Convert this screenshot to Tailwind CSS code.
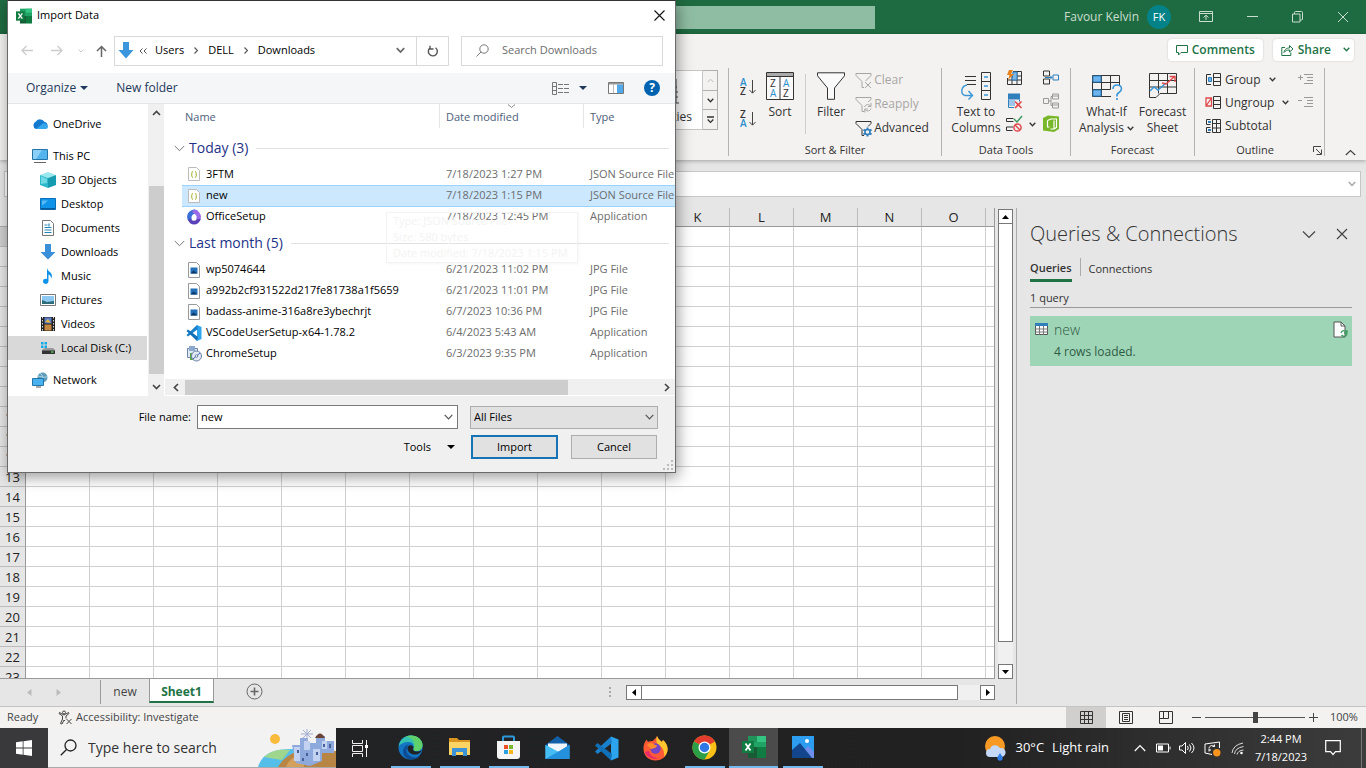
<!DOCTYPE html>
<html lang="en">
<head>
    <meta charset="UTF-8">
    <meta name="viewport" content="width=device-width, initial-scale=1.0">
    <title>Import Data - Excel</title>
    <script src="https://cdn.jsdelivr.net/npm/@tailwindcss/browser@4"></script>
</head>
<body class="relative h-screen overflow-hidden flex flex-col bg-[#e6e6e6] text-[#333] text-xs font-['Open_Sans','Noto_Sans',sans-serif]">

    <!-- Title bar -->
    <header class="h-[34px] shrink-0 bg-[#1f6b41] flex items-center justify-end text-[#c9decf]">
        <input type="text" aria-label="Search" class="w-[274px] h-[23px] bg-[#8fbda3] mr-[189px] outline-none">
        <span class="mr-2">Favour Kelvin</span>
        <button aria-label="Account" class="size-6 rounded-full bg-[#038387] text-white text-[11px] mr-7">FK</button>
        <button aria-label="Ribbon display options" class="mr-[34px]">
            <svg width="14" height="12" viewBox="0 0 14 12" fill="none" stroke="currentColor"><path d="M.5.5h13v10H.5zM.5 2.5h13M7 9V4.500M4.500 6.500 7 4.200l2.500 2.300"/></svg>
        </button>
        <button aria-label="Minimize" class="mr-[34px]">
            <svg width="11" height="12" viewBox="0 0 11 12" stroke="currentColor"><path d="M0 5.500h11"/></svg>
        </button>
        <button aria-label="Restore" class="mr-[34px]">
            <svg width="11" height="12" viewBox="0 0 11 12" fill="none" stroke="currentColor"><path d="M.5 3h7.500v8H.5zM2.500 3V1.500q0-1 1-1h6q1 0 1 1V8q0 1-1 1H8"/></svg>
        </button>
        <button aria-label="Close" class="mr-[17px]">
            <svg width="12" height="12" viewBox="0 0 12 12" stroke="currentColor"><path d="m1 1 10 10M11 1 1 11"/></svg>
        </button>
    </header>

    <!-- Ribbon -->
    <section class="h-[126px] shrink-0 bg-[#f3f2f1] shadow-[0_1px_4px_rgba(0,0,0,.3)] relative">
        <div class="h-[34px] flex items-center justify-end gap-2.5 pr-3 pb-[3px]">
            <button class="h-[22px] px-2 bg-white rounded-sm shadow-[0_0_2px_rgba(0,0,0,.2)] text-[#217346] text-xs font-semibold flex items-center gap-1">
                <svg width="12" height="12" viewBox="0 0 12 12" fill="none" stroke="currentColor"><path d="M.5 1.500h11v7H5L2.500 11V8.500h-2z"/></svg>
                Comments
            </button>
            <button class="h-[22px] px-1 pl-2 bg-white rounded-sm shadow-[0_0_2px_rgba(0,0,0,.2)] text-[#217346] text-xs font-semibold flex items-center gap-1">
                <svg width="13" height="12" viewBox="0 0 13 12" fill="none" stroke="currentColor"><path d="M4 3.500H.8v8h9V8.500M3 8.500C3.500 5 6 4 8.500 4V1.500l3.500 3.500-3.500 3V6C6 6 4.500 6.500 3 8.500z"/></svg>
                Share
                <svg class="ml-2" width="7" height="5" viewBox="0 0 7 5" fill="none" stroke="currentColor" stroke-width="1.300"><path d="m.7.800 2.800 2.900L6.300.800"/></svg>
            </button>
        </div>

        <div class="h-[88px] flex justify-end text-xs">
            <!-- Data types gallery, mostly behind the dialog -->
            <div class="flex items-start pr-2.5 border-r border-[#b5b3b1]">
                <div class="w-28 h-[60px] mt-0.5 border border-[#c6c6c6] bg-white flex flex-col items-end justify-end pr-2.5 pb-1">
                    <svg class="mr-3" width="14" height="30" viewBox="0 0 14 30" fill="none" stroke="#444"><path d="M2 3v20M10 0v24M2 8h9M2 13h10M2 18h10M2 24h11"/></svg>
                    <span>Properties</span>
                </div>
                <div class="mt-0.5 w-[15px] flex flex-col border border-l-0 border-[#b0b0b0] divide-y divide-[#b0b0b0] h-[60px]">
                    <button aria-label="Scroll up" class="flex-1 grid place-items-center text-[#bbb]"><svg width="7" height="5" viewBox="0 0 7 5" fill="none" stroke="currentColor"><path d="M.7 4 3.500 1.200 6.300 4"/></svg></button>
                    <button aria-label="Scroll down" class="flex-1 grid place-items-center"><svg width="7" height="5" viewBox="0 0 7 5" fill="none" stroke="currentColor" stroke-width="1.300"><path d="m.7.800 2.800 2.900L6.300.800"/></svg></button>
                    <button aria-label="More" class="flex-1 grid place-items-center"><svg width="7" height="8" viewBox="0 0 7 8" fill="none" stroke="currentColor" stroke-width="1.300"><path d="M0 1h7M.7 3.500l2.800 2.900 2.800-2.900"/></svg></button>
                </div>
            </div>

            <!-- Sort & Filter -->
            <div class="w-[213px] flex flex-col border-r border-[#b5b3b1]">
                <div class="flex-1 flex items-start pl-2.5">
                    <div class="flex flex-col gap-2.5 pt-2">
                        <button aria-label="Sort A to Z">
                            <svg width="17" height="22" viewBox="0 0 17 22" class="text-[10px] font-semibold"><text x="1" y="10" fill="#2f8fcb">A</text><text x="1" y="19" fill="#333">Z</text><path d="M13.500 4v13M10.500 14l3 3.200 3-3.200" fill="none" stroke="#444"/></svg>
                        </button>
                        <button aria-label="Sort Z to A">
                            <svg width="17" height="22" viewBox="0 0 17 22" class="text-[10px] font-semibold"><text x="1" y="10" fill="#333">Z</text><text x="1" y="19" fill="#2f8fcb">A</text><path d="M13.500 4v13M10.500 14l3 3.200 3-3.200" fill="none" stroke="#444"/></svg>
                        </button>
                    </div>
                    <button class="ml-2.5 pt-1 flex flex-col items-center gap-1">
                        <svg width="28" height="28" viewBox="0 0 28 28" class="text-[10px]"><path d="M.5.500h27v27H.5z" fill="#fafafa" stroke="#333"/><path d="M1 1h26v3.500H1z" fill="#aaa"/><path d="M.5 4.500h27M14 4.500v23" stroke="#333"/><text x="4" y="15" fill="#333">Z</text><text x="17" y="15" fill="#2f8fcb">A</text><text x="4" y="25" fill="#2f8fcb">A</text><text x="17" y="25" fill="#333">Z</text></svg>
                        Sort
                    </button>
                    <div class="w-px h-[60px] bg-[#d0cecc] mt-1.5 ml-[11px]"></div>
                    <button class="ml-[11px] pt-1 flex flex-col items-center gap-1">
                        <svg width="28" height="28" viewBox="0 0 28 28" fill="#fafafa" stroke="#333"><path d="M.5.800h27v3L17.500 16v11.300h-7V16L.5 3.800z"/></svg>
                        Filter
                    </button>
                    <div class="ml-2.5 flex flex-col">
                        <button class="h-6 flex items-center gap-px text-[#a8a6a4]">
                            <svg width="18" height="17" viewBox="0 0 18 17" fill="none" stroke="currentColor"><path d="M1 1.500h15v2L10.500 9M1 3.500 7 9.500v6h2M1 1.500v2M10 10l6 6M16 10l-6 6"/></svg>
                            Clear
                        </button>
                        <button class="h-6 flex items-center gap-px text-[#a8a6a4]">
                            <svg width="18" height="17" viewBox="0 0 18 17" fill="none" stroke="currentColor"><path d="M1 1.500h15v2L13 6M1 3.500 7 9.500v6h2M1 1.500v2M9.500 11c1-3 4.500-3 6-1M16 7v3.500h-3M16 12.500c-1 3-4.500 3-6 1M9.800 16.500v-3.500h3"/></svg>
                            Reapply
                        </button>
                        <button class="h-6 flex items-center gap-px">
                            <svg width="18" height="17" viewBox="0 0 18 17" fill="none" stroke="#333"><path d="M1 1.500h15v2L13 6.500M1 3.500 7 9.500v6h2M1 1.500v2"/><path d="M12.500 7.500v9M8.500 9.700l8 4.600M16.500 9.700l-8 4.600" stroke="#2f7fbd" stroke-width="2"/><circle cx="12.500" cy="12" r="2.500" fill="#f3f2f1" stroke="#2f7fbd" stroke-width="1.500"/></svg>
                            Advanced
                        </button>
                    </div>
                </div>
                <p class="text-center text-[11px] leading-3">Sort &amp; Filter</p>
            </div>

            <!-- Data Tools -->
            <div class="w-[129px] flex flex-col border-r border-[#b5b3b1]">
                <div class="flex-1 flex items-start pl-2.5">
                    <button class="w-12 pt-1 flex flex-col items-center gap-1 leading-4">
                        <svg width="32" height="28" viewBox="0 0 32 28" fill="none" stroke="#333"><path d="M5 4.500h11M5 8.500h11M7 12.500h9"/><path d="M21.500.500h9v27h-9zM21.500 9.500h9M21.500 18.500h9"/><path d="M24 5h4M24 14h4M24 23h4M7 13C1 14 0 22 5 23.500h7M8.500 19l4 4.500-4 4" stroke="#3a96d6" stroke-width="1.400"/></svg>
                        Text to Columns
                    </button>
                    <div class="ml-[5px] grid grid-cols-[37px_18px] gap-y-[3px]">
                        <button aria-label="Flash Fill"><svg width="18" height="20" viewBox="0 0 18 20" fill="none" stroke="#333"><path d="M8 3.500h8.500v13h-14V10M2.500 12h14M8.500 8h8M7 8v8.500M12 3.500v13"/><path d="M8 4h4v8H7z" fill="#7db8e8" stroke="#2f7fbd"/><path d="M4 2h4L6 6h3l-6 6 1.500-5H2z" fill="#e8811c" stroke="none"/></svg></button>
                        <button aria-label="Consolidate"><svg width="18" height="20" viewBox="0 0 18 20" fill="none" stroke="#333"><path d="M1.500 3h6v5h-6zM1.500 11h6v5h-6z"/><path d="M11 7h5.500v5H11zM3 9.500h7M8 7.500l2 2-2 2" stroke="#2f7fbd"/></svg></button>
                        <button aria-label="Remove Duplicates"><svg width="18" height="20" viewBox="0 0 18 20" fill="none"><path d="M3 2.500h12v6H3z" fill="#2f7fbd"/><path d="M3.500 8.500v8H9M14.500 8.500v2" stroke="#2f7fbd"/><path d="M4 9h6v6H4z" fill="#9cc7ea"/><path d="m10 10.500 6.500 6.500M16.500 10.500 10 17" stroke="#e0484c" stroke-width="1.600"/></svg></button>
                        <button aria-label="Relationships"><svg width="18" height="20" viewBox="0 0 18 20" fill="none" stroke="#9b9997"><path d="M1.500 7.500h5v5h-5zM10.500 3h6v5h-6zM10.500 12h6v5h-6zM6.500 10H9V5.500h1.500M9 10v4.500h1.500M10.500 5h6M10.500 14h6"/></svg></button>
                        <button aria-label="Data Validation" class="flex items-center gap-1.5"><svg width="18" height="20" viewBox="0 0 18 20" fill="none" stroke="#333"><path d="M8.500 4.500h-7v3h7M8 13h-6.500v3.500h6"/><path d="m9 5 3 3 5-6" stroke="#3c9a5f" stroke-width="1.500"/><circle cx="12.500" cy="13.500" r="3.600" stroke="#e0484c" stroke-width="1.500"/><path d="m10 11 5 5" stroke="#e0484c" stroke-width="1.500"/></svg><svg width="7" height="5" viewBox="0 0 7 5" fill="none" stroke="currentColor" stroke-width="1.300"><path d="m.7.800 2.800 2.900L6.300.800"/></svg></button>
                        <button aria-label="Data Model"><svg width="18" height="20" viewBox="0 0 18 20"><path d="m1 4 5-2.500 11 1V15l-5 3-11-1.500z" fill="#78b72a"/><path d="M5.500 6.500 9 5h5.500v8.500L12 15M5.500 6.500V13h2M12 6.500V15H8.500" fill="none" stroke="#fff" stroke-width="1.200"/></svg></button>
                    </div>
                </div>
                <p class="text-center text-[11px] leading-3">Data Tools</p>
            </div>

            <!-- Forecast -->
            <div class="w-[124px] flex flex-col border-r border-[#b5b3b1]">
                <div class="flex-1 flex items-start justify-center gap-1 leading-4">
                    <button class="w-14 pt-1 flex flex-col items-center gap-1">
                        <svg width="32" height="28" viewBox="0 0 32 28" fill="none" stroke="#333"><path d="M1.500 3.500h27V14M20 24.500H1.500v-21M1.500 10.500h27M1.500 17.500h18M10.500 3.500v21M19.500 3.500v14"/><path d="M2 4h8v6H2zM2 18h8v6H2z" fill="#6eb4ee" stroke="#2f7fbd"/><path d="M22 17q0-4 4-4t4.500 3.500q0 2.500-2.500 4t-2 4M26 26v2" stroke="#3a96d6" stroke-width="1.600"/></svg>
                        <span class="whitespace-nowrap">What-If<br>Analysis <svg class="inline" width="7" height="5" viewBox="0 0 7 5" fill="none" stroke="currentColor" stroke-width="1.300"><path d="m.7.800 2.800 2.900L6.300.800"/></svg></span>
                    </button>
                    <button class="w-12 pt-1 flex flex-col items-center gap-1">
                        <svg width="30" height="28" viewBox="0 0 30 28" fill="none" stroke="#333"><path d="M1.500 1.500h27v20H12l-4 4H1.500zM1.500 8.500h27M1.500 15h27M10.500 1.500v20M19.500 1.500v20"/><path d="m2 19 4-4 4 3 8-7" stroke="#3a96d6" stroke-width="1.500"/><path d="m14 11 4 1 8-7M21.500 4.500H27V10" stroke="#e0484c" stroke-width="1.400"/></svg>
                        Forecast Sheet
                    </button>
                </div>
                <p class="text-center text-[11px] leading-3">Forecast</p>
            </div>

            <!-- Outline -->
            <div class="w-[130px] flex flex-col border-r border-[#b5b3b1]">
                <div class="flex-1 grid grid-cols-[1fr_26px] auto-rows-[23px] items-center pl-2.5">
                    <button class="flex items-center gap-[3px]"><svg width="17" height="15" viewBox="0 0 17 15" fill="none" stroke="#333"><path d="M8.500 1.500h7v12h-7zM8.500 5.500h7M8.500 9.500h7M6 2.500H1.500v10H6"/><path d="M3.500 5.500h3v4h-3z" fill="#6eb4ee" stroke="#2f7fbd"/></svg>Group<svg class="ml-[5px]" width="7" height="5" viewBox="0 0 7 5" fill="none" stroke="currentColor" stroke-width="1.300"><path d="m.7.800 2.800 2.900L6.300.800"/></svg></button>
                    <button aria-label="Show Detail"><svg width="16" height="13" viewBox="0 0 16 13" fill="none" stroke="#9b9997"><path d="M0 4.500h5M2.500 2v5M6 1.500h9M9 4.500h6M9 7.500h6M6 10.500h9"/></svg></button>
                    <button class="flex items-center gap-[3px]"><svg width="17" height="15" viewBox="0 0 17 15" fill="none" stroke="#333"><path d="M8.500 1.500h7v12h-7zM8.500 5.500h7M8.500 9.500h7"/><path d="M1 3h5.500v8H1zM1 11l5.500-8" stroke="#e0484c" stroke-width="1.300"/></svg>Ungroup<svg class="ml-[5px]" width="7" height="5" viewBox="0 0 7 5" fill="none" stroke="currentColor" stroke-width="1.300"><path d="m.7.800 2.800 2.900L6.300.800"/></svg></button>
                    <button aria-label="Hide Detail"><svg width="16" height="13" viewBox="0 0 16 13" fill="none" stroke="#9b9997"><path d="M0 4.500h4M6 1.500h9M9 4.500h6M9 7.500h6M6 10.500h9"/></svg></button>
                    <button class="flex items-center gap-[3px]"><svg width="17" height="16" viewBox="0 0 17 16" fill="none" stroke="#333"><path d="M7.500 1.500h8v13h-8zM7.500 5.500h8M7.500 10h8M11.500 1.500v13M5.500 1.500h-4v5h4M5.500 9.500h-4v5h4"/><path d="M3 4h3M3 12h3" stroke="#2f7fbd" stroke-width="2"/></svg>Subtotal</button>
                </div>
                <div class="flex items-center">
                    <p class="flex-1 text-center text-[11px] leading-3 pl-0.5">Outline</p>
                    <button aria-label="Outline settings" class="mr-0.5"><svg width="9" height="9" viewBox="0 0 9 9" fill="none" stroke="#444"><path d="M.5 6V.5H8M3 3l5 5M8.500 3.500v5h-5"/></svg></button>
                </div>
            </div>
            <button aria-label="Collapse ribbon" class="w-[41px] pl-5 self-end"><svg width="11" height="7" viewBox="0 0 11 7" fill="none" stroke="#444" stroke-width="1.200"><path d="m.8 6 4.700-4.500L10.200 6"/></svg></button>
        </div>
    </section>

    <!-- Formula bar -->
    <div class="h-12 shrink-0 flex items-start gap-2 pl-1 pr-[5px] pt-[11px]">
        <input type="text" aria-label="Name box" class="w-36 h-[26px] bg-white border border-[#c6c6c6]">
        <div class="flex-1 h-[26px] bg-white border border-[#c6c6c6] flex items-center pr-1">
            <input type="text" aria-label="Formula" class="flex-1 min-w-0 outline-none">
            <svg width="8" height="6" viewBox="0 0 8 6" fill="none" stroke="#a5a5a5" stroke-width="1.400"><path d="m.8 1 3.200 3.500L7.200 1"/></svg>
        </div>
    </div>

    <main class="flex-1 min-h-0 flex">
        <div class="flex-1 min-w-0 flex flex-col">
            <div class="flex-1 min-h-0 flex">
                <div class="flex-1 min-w-0 overflow-hidden bg-white border-r border-b border-[#9a9a9a]">
                    <table class="table-fixed w-max border-separate border-spacing-0 text-[13px] text-[#222]">
                        <thead><tr id="columns" class="h-[19px]"></tr></thead>
                        <tbody id="rows"></tbody>
                    </table>
                </div>
                <div class="w-[15px] ml-[3px] mr-[3px] mt-px flex flex-col">
                    <button aria-label="Scroll up" class="h-[15px] bg-white border border-[#777] grid place-items-center"><svg width="7" height="4" viewBox="0 0 7 4"><path d="M0 4 3.500 0 7 4z"/></svg></button>
                    <div class="flex-1 bg-[#f0f0f0]"><div class="h-[95%] bg-white border border-t-0 border-[#777]"></div></div>
                    <button aria-label="Scroll down" class="h-[15px] bg-white border border-[#777] grid place-items-center"><svg width="7" height="4" viewBox="0 0 7 4"><path d="m0 0 3.500 4L7 0z"/></svg></button>
                </div>
            </div>

            <!-- Sheet tabs -->
            <div class="h-[27px] flex items-start text-[#444]">
                <div class="w-[101px] h-6 mt-px flex items-center gap-6 pl-[27px] border-r border-[#9a9a9a]">
                    <button aria-label="Previous sheet"><svg width="5" height="7" viewBox="0 0 5 7" fill="#bbb"><path d="M4.500 0v7L0 3.500z"/></svg></button>
                    <button aria-label="Next sheet"><svg width="5" height="7" viewBox="0 0 5 7" fill="#bbb"><path d="M.5 0v7L5 3.500z"/></svg></button>
                </div>
                <button class="w-12 h-6 pt-0.5 text-xs">new</button>
                <button class="w-[65px] h-6 pt-[3px] bg-white border-x border-[#9a9a9a] border-b-2 border-b-[#217346] text-[#217346] text-xs font-bold">Sheet1</button>
                <button aria-label="New sheet" class="ml-8 mt-1"><svg width="17" height="17" viewBox="0 0 17 17" fill="none" stroke="#666"><circle cx="8.500" cy="8.500" r="7.500"/><path d="M8.500 4.500v8M4.500 8.500h8" stroke-width="1.600"/></svg></button>
                <div class="flex-1"></div>
                <svg class="mt-2 mr-3.5" width="3" height="11" viewBox="0 0 3 11" fill="#aaa"><path d="M0 0h2v2H0zM0 4h2v2H0zM0 8h2v2H0z"/></svg>
                <div class="w-[369px] h-[15px] mt-1.5 mr-[21px] flex bg-[#f0f0f0]">
                    <button aria-label="Scroll left" class="w-4 bg-white border border-[#777] grid place-items-center"><svg width="4" height="7" viewBox="0 0 4 7"><path d="M4 0v7L0 3.500z"/></svg></button>
                    <div class="w-[316px] bg-white border border-[#777] border-l-0"></div>
                    <button aria-label="Scroll right" class="w-[15px] ml-auto bg-white border border-[#777] grid place-items-center"><svg width="4" height="7" viewBox="0 0 4 7"><path d="M0 0v7l4-3.500z"/></svg></button>
                </div>
            </div>
        </div>

        <!-- Queries pane -->
        <aside class="w-[350px] mb-0.5 pl-[13px] pr-3.5 pt-2.5 border-l border-[#ababab]">
            <div class="h-8 flex items-center">
                <h2 class="flex-1 text-xl font-light">Queries &amp; Connections</h2>
                <button aria-label="Pane options" class="mr-5"><svg width="14" height="9" viewBox="0 0 14 9" fill="none" stroke="#444" stroke-width="1.200"><path d="m1 1.500 6 6 6-6"/></svg></button>
                <button aria-label="Close pane" class="mr-1"><svg width="12" height="12" viewBox="0 0 12 12" stroke="#444" stroke-width="1.200"><path d="m1 1 10 10M11 1 1 11"/></svg></button>
            </div>
            <div class="flex mt-2 h-6 text-[11px]">
                <button class="font-semibold border-b-3 border-[#217346] pt-0.5 pb-[3px] leading-4">Queries</button>
                <span class="w-px h-[18px] bg-[#ababab] mx-2"></span>
                <button class="h-5 pt-0.5 leading-4">Connections</button>
            </div>
            <p class="mt-2 h-[18px] text-[11px] leading-4 border-b border-[#999]">1 query</p>
            <div class="mt-2 h-[50px] bg-[#9fd5b7] px-1 flex items-start">
                <svg class="mt-[7px] ml-px" width="13" height="12" viewBox="0 0 13 12"><path d="M.5.500h12v11H.5z" fill="#fff" stroke="#555"/><path d="M0 0h13v3H0z" fill="#2f7fbd"/><path d="M4.500 3v9M8.500 3v9M0 6h13M0 9h13" stroke="#777"/></svg>
                <div class="flex-1 pl-1.5 pt-1 text-[#2f5b45]">
                    <h3 class="text-sm font-light leading-5">new</h3>
                    <p class="leading-6">4 rows loaded.</p>
                </div>
                <svg class="mt-[5px]" width="15" height="17" viewBox="0 0 15 17" fill="none"><path d="M1 1h7l4 4v11H1z" fill="#fff" stroke="#555"/><path d="M8 1v4h4" stroke="#555"/><path d="M8 12c1-3 4-3 5.500-1M14 9v3h-3M14 13c-1 3-4 3-5.500 1" stroke="#3c9a5f" stroke-width="1.300"/></svg>
            </div>
        </aside>
    </main>

    <!-- Status bar -->
    <footer class="h-[22px] shrink-0 bg-[#f3f2f1] border-t border-[#c4c4c4] flex items-center pl-[7px] pr-2 text-[11px] text-[#444]">
        <span class="w-[51px]">Ready</span>
        <button class="flex items-center gap-[3px]">
            <svg width="15" height="15" viewBox="0 0 15 15" fill="none" stroke="#444"><circle cx="6" cy="2.500" r="1.500"/><path d="M1 3.500 4.500 6v3L2.500 13.500l1.500.500 2-4 1 1M1 3.500l.500-1L6 5l4.500-2.500.5 1L8 6v2.500M8.500 9l5 5M13.500 9l-5 5"/></svg>
            Accessibility: Investigate
        </button>
        <div class="flex-1"></div>
        <button aria-label="Normal view" class="w-10 h-[21px] bg-[#d0cfce] grid place-items-center"><svg width="13" height="13" viewBox="0 0 13 13" fill="none" stroke="#333"><path d="M.5.500h12v12H.5zM4.500 0v13M8.500 0v13M0 4.500h13M0 8.500h13"/></svg></button>
        <button aria-label="Page layout" class="w-10 grid place-items-center"><svg width="14" height="13" viewBox="0 0 14 13" fill="none" stroke="#333"><path d="M.5.500h13v12H.5zM3.500 2.500h7v8h-7zM5 4.500h4M5 6.500h4M5 8.500h4"/></svg></button>
        <button aria-label="Page break preview" class="w-10 grid place-items-center"><svg width="14" height="13" viewBox="0 0 14 13" fill="none" stroke="#333"><path d="M.5.500h13v12H.5zM4.500.500v7M9.500.500v7M.5 7.500h9"/></svg></button>
        <button aria-label="Zoom out" class="ml-1.5"><svg width="9" height="9" viewBox="0 0 9 9" stroke="#444"><path d="M0 4.500h9"/></svg></button>
        <input type="range" aria-label="Zoom" value="51" class="w-[100px] h-3 mx-1 appearance-none bg-transparent [&::-webkit-slider-runnable-track]:h-px [&::-webkit-slider-runnable-track]:bg-[#555] [&::-webkit-slider-thumb]:appearance-none [&::-webkit-slider-thumb]:w-[5px] [&::-webkit-slider-thumb]:h-[11px] [&::-webkit-slider-thumb]:-mt-[5px] [&::-webkit-slider-thumb]:bg-[#444]">
        <button aria-label="Zoom in"><svg width="9" height="9" viewBox="0 0 9 9" stroke="#444"><path d="M0 4.500h9M4.500 0v9"/></svg></button>
        <span class="ml-3 w-7">100%</span>
    </footer>

    <!-- Taskbar -->
    <nav class="h-10 shrink-0 bg-linear-to-r from-[#232428] via-[#212121] to-[#3c3c3c] via-70% flex items-stretch text-white">
        <button aria-label="Start" class="w-12 bg-[#39393b] grid place-items-center"><svg width="16" height="16" viewBox="0 0 16 16" fill="#fff"><path d="M0 2.300 6.700 1.300v6.300H0zM7.500 1.200 16 0v7.600H7.500zM0 8.400h6.700v6.300L0 13.700zM7.500 8.400H16V16l-8.500-1.200z"/></svg></button>
        <label class="w-72 bg-[#f2f2f2] border-b border-[#aaa] flex items-center pl-3 overflow-hidden">
            <svg class="shrink-0" width="17" height="17" viewBox="0 0 17 17" fill="none" stroke="#222" stroke-width="1.300"><circle cx="10.500" cy="6.500" r="5.500"/><path d="M6.500 10.500.800 16.200"/></svg>
            <input type="text" aria-label="Search Windows" placeholder="Type here to search" class="flex-1 min-w-0 pl-[11px] text-sm outline-none placeholder:text-[#333]">
            <svg class="shrink-0 self-end" width="80" height="38" viewBox="0 0 80 38">
                <circle cx="19" cy="10" r="5" fill="#f9bb3c"/>
                <path d="M2 38C6 24 18 19 42 20v18z" fill="#55bfea"/><path d="M8 28c8-7 16-8 26-7l-8 10z" fill="#9fd68e"/>
                <path d="M22 38c6-11 18-16 28-18l30 2v16z" fill="#b98545"/><path d="M30 38c3-8 10-12 18-14v14z" fill="#d3a05e"/>
                <path d="M36 16h8V9h8v5h8V7h9v5h9v12H66v8l-12 5-14-3z" fill="#8ea9dc"/>
                <path d="M38 18h6v14h-6zM48 12h6v9h-6zM57 20h7v12h-7zM66 12h5v8h-5z" fill="#c3d2f0"/>
                <path d="M59 9q5-9 10 0z" fill="#6b4237"/><path d="M51 0v12M45 5h12M47 1l8 8M55 1l-8 8" stroke="#a3afd0"/>
                <path d="M41 21h2v3h-2zM50 24h2v3h-2zM60 23h2v3h-2zM67 15h2v3h-2zM46 29h2v3h-2zM73 15h2v4h-2z" fill="#47609c"/>
            </svg>
        </label>
        <button aria-label="Task View" class="w-12 mr-0.5 grid place-items-center"><svg width="17" height="17" viewBox="0 0 17 17" fill="none" stroke="#eee"><path d="M.5 0v3.500h10V0M.5 5.500h10v6H.5zM.5 17v-3.500h10V17M14.500 0v17"/><path d="M13 5h3v3h-3z" fill="#fff" stroke="none"/></svg></button>
        <button aria-label="Edge" class="w-[49px] px-1 flex flex-col items-center justify-between"><span></span>
            <svg width="25" height="25" viewBox="0 0 25 25"><circle cx="12.500" cy="12.500" r="12" fill="#1474c4"/><path d="M.8 11C2 4 7 .5 13 .5c7 0 11.500 5 11.500 9.500 0 4-3 6-6 6-2.500 0-4-1-3-3 1-3-1-6-5-6-4.500 0-8 2-9.700 4z" fill="#35c1b0"/><path d="M13 .5c7 0 11.500 5 11.500 9.500 0 4-3 6-6 6-2 0-3.500-.800-3-2.500C18 9 16 3 8 1.600 9.500.800 11 .5 13 .5z" fill="#5fd06a"/><path d="M9 12c-2 5 2 10.500 8 10.500 3 0 5-1 6-2.500C21 23 17 24.800 13 24.500 6 24 4 18 5.500 14 6.500 11 9 9.500 11 9.500 10 10 9.500 11 9 12z" fill="#0c4d96"/><path d="M9.500 12.500c1-2.500 4.500-3 6-.500-1 3 0 4.500 3 4.500 2 0 4-.500 5-1.500-.500 3-4 5-7.500 4.500-4-.500-7-3.500-6.500-7z" fill="#202226"/></svg>
            <span class="w-10 h-0.5 bg-[#76b9ed]"></span></button>
        <button aria-label="File Explorer" class="w-[49px] px-1 flex flex-col items-center justify-between"><span></span>
            <svg width="23" height="20" viewBox="0 0 23 20"><path d="M1 1h8l2 2h11v4H1z" fill="#d9951f"/><path d="M1 5h21v13H1z" fill="#fbd464"/><path d="M4 19v-8h15v8h-4v-4H8v4z" fill="#3d93d6"/></svg>
            <span class="w-10 h-0.5 bg-[#76b9ed]"></span></button>
        <button aria-label="Microsoft Store" class="w-[49px] px-1 flex flex-col items-center justify-between"><span></span>
            <svg width="25" height="25" viewBox="0 0 25 25"><path d="M1 6h23v15q0 3-3 3H4q-3 0-3-3z" fill="#f5f5f5"/><path d="M7 6V2.500q0-1 1-1h9q1 0 1 1V6" fill="none" stroke="#2c9ad8" stroke-width="2"/><path d="M8 10h4v4H8z" fill="#f04e23"/><path d="M13 10h4v4h-4z" fill="#7cb82f"/><path d="M8 15h4v4H8z" fill="#2c9fe0"/><path d="M13 15h4v4h-4z" fill="#f8b71c"/></svg>
            <span class="w-10 h-0.5 bg-[#76b9ed]"></span></button>
        <button aria-label="Mail" class="w-[49px] grid place-items-center"><svg width="25" height="24" viewBox="0 0 25 24"><path d="M.5 9 12.500 0l12 9v3H.5z" fill="#1360a8"/><path d="M.5 9v14h24V9l-12 8z" fill="#38b0ee"/><path d="M3 7.500h19v3L12.500 17 3 10.500z" fill="#f2f6fa"/><path d="M.5 9v14L14 16z" fill="#45bdf3"/><path d="M.5 23 24.500 9v14z" fill="#2391dc"/></svg></button>
        <button aria-label="Visual Studio Code" class="w-[49px] grid place-items-center"><svg width="25" height="25" viewBox="0 0 25 25"><path d="m17 .5 7.500 3v18l-7.500 3z" fill="#2da5ee"/><path d="M17 .5 1 15.500l2.500 2.500L18 7z" fill="#1a80cb"/><path d="M17 24.500 1 9.500 3.500 7 18 18z" fill="#1171b8"/></svg></button>
        <button aria-label="Firefox" class="w-[49px] grid place-items-center"><svg width="25" height="25" viewBox="0 0 25 25"><path d="M12.500 24.500C5 24.500.5 19 .5 13 .5 8 2 6 3.500 3.500L5 6c1-1 3-1 5-1 1-2 3-2 4-5 1 3 3 4 5 6l1-2c3 3 4.500 6 4.500 9 0 7-5.500 11.500-12 11.500z" fill="#ff5a36"/><path d="M14 0c1 3 3 4 5 6l1-2c6 5 6 12 1 17 1-6-2-11-6-12-2-3-2-6-1-9z" fill="#ffc52f"/><path d="M2 16c2 6 9 8 14 6-5 0-9-2-10-7z" fill="#e5286f"/><circle cx="12.500" cy="12.500" r="5.200" fill="#7446c6"/><path d="M4 9c3-3 6-2 8 0 3 0 2 2 0 3-2 0-2 1-4 1z" fill="#ff8b2b"/></svg></button>
        <button aria-label="Chrome" class="w-[49px] px-1 flex flex-col items-center justify-between"><span></span>
            <svg width="25" height="25" viewBox="0 0 25 25"><circle cx="12.500" cy="12.500" r="12" fill="#fbc116"/><path d="M12.500 12.500 2.100 6.500a12 12 0 0 1 20.800 0z" fill="#e33b2e"/><path d="M2.100 6.500a12 12 0 0 0 10.400 18l5.200-9-5.200-3z" fill="#2b9f48"/><circle cx="12.500" cy="12.500" r="6" fill="#fff"/><circle cx="12.500" cy="12.500" r="4.700" fill="#2f77e5"/></svg>
            <span class="w-10 h-0.5 bg-[#76b9ed]"></span></button>
        <button aria-label="Excel" class="w-[49px] bg-[#4b4b4b] flex flex-col items-center justify-between"><span></span>
            <svg width="24" height="22" viewBox="0 0 24 22"><path d="M6 0h18v22H6z" fill="#21a366"/><path d="M6 0h9v6H6z" fill="#20935a"/><path d="M15 0h9v6h-9z" fill="#33c481"/><path d="M6 11h9v11H6z" fill="#185c37"/><path d="M15 11h9v5h-9zM15 16h9v6h-9z" fill="#107c41"/><path d="M0 5h12v12H0z" fill="#107c41"/><path d="m3.500 7.500 5 7M8.500 7.500l-5 7" stroke="#fff" stroke-width="1.800"/></svg>
            <span class="w-full h-0.5 bg-[#76b9ed]"></span></button>
        <button aria-label="Photos" class="w-[49px] px-1 flex flex-col items-center justify-between"><span></span>
            <svg width="22" height="22" viewBox="0 0 22 22"><path d="M0 0h22v22H0z" fill="#2c9df0"/><path d="m11 14 5-4 6 6v6H11z" fill="#6d8eea"/><path d="M0 14 8 7l12 15H0z" fill="#12458c"/><circle cx="15" cy="5" r="2" fill="#fff"/></svg>
            <span class="w-10 h-0.5 bg-[#76b9ed]"></span></button>
        <div class="flex-1"></div>
        <button class="flex items-center gap-2 text-[13px] mr-[25px]">
            <svg width="23" height="25" viewBox="0 0 23 25"><circle cx="11" cy="10" r="10" fill="#f79a24"/><path d="M6 21a4 4 0 0 1 0-8 5.500 5.500 0 0 1 10-1 4.500 4.500 0 0 1 2 9z" fill="#c5d8f8"/><path d="m16 17 2.500 4a2.700 2.700 0 1 1-5 0z" fill="#2c7be5"/></svg>
            30°C <span>Light rain</span>
        </button>
        <button aria-label="Show hidden icons" class="mr-2.5"><svg width="12" height="8" viewBox="0 0 12 8" fill="none" stroke="#fff" stroke-width="1.200"><path d="m.8 7 5.200-5.500L11.200 7"/></svg></button>
        <button aria-label="Battery" class="mr-2"><svg width="15" height="10" viewBox="0 0 15 10" fill="none" stroke="#fff"><path d="M.5 1h12v8H.5zM14 3.500v3"/><path d="M2 2.500h5v5H2z" fill="#fff" stroke="none"/></svg></button>
        <button aria-label="Volume" class="mr-2"><svg width="17" height="14" viewBox="0 0 17 14" fill="none" stroke="#fff"><path d="M.5 5h2.500L6.500 1.500v11L3 9H.5zM8.500 5q1.500 2 0 4M10.500 3.500q3 3.500 0 7M12.500 2q5 5 0 10"/></svg></button>
        <button aria-label="Update" class="mr-2.5"><svg width="17" height="17" viewBox="0 0 17 17" fill="none" stroke="#fff"><path d="M8 14.500 1 13V4l14.500-2v6"/><path d="M5 8c1-3 4-3 5.500-1.500V4.500M10.500 6.500h-2M5 8.500v3M5 10h2"/><circle cx="12.800" cy="12.800" r="3.700" fill="#f7941d" stroke="none"/></svg></button>
        <button aria-label="Network" class="mr-2"><svg width="13" height="13" viewBox="0 0 13 13" fill="none" stroke="#ddd"><path d="M1 11Q2 3 12 1M3.500 12Q4 6 12.500 4.500M6 12.500Q7 8.500 12.500 8"/><circle cx="10.500" cy="11" r="1.300" fill="#fff" stroke="none"/></svg></button>
        <button class="w-[58px] text-center text-[11px] leading-[18px]">2:44 PM<br>7/18/2023</button>
        <button aria-label="Notifications" class="ml-[15px] mr-5"><svg width="16" height="16" viewBox="0 0 16 16" fill="none" stroke="#fff" stroke-width="1.200"><path d="M.7.700h14.600v11h-4.800L8 14.500l-2.500-2.800H.7z"/></svg></button>
        <button aria-label="Show desktop" class="w-[5px] border-l border-[#777]"></button>
    </nav>

    <!-- Import Data dialog -->
    <div role="dialog" aria-label="Import Data" class="absolute left-[7px] top-0 w-[669px] h-[473px] flex flex-col bg-white text-black text-[11px] border border-[#6a6a6a] border-t-[#333] shadow-[2px_4px_14px_rgba(0,0,0,.4)]">
        <div class="h-8 shrink-0 flex items-center pl-2 pr-2.5 pb-[3px]">
            <svg width="16" height="16" viewBox="0 0 24 22"><path d="M6 0h18v22H6z" fill="#21a366"/><path d="M15 0h9v6h-9z" fill="#33c481"/><path d="M6 11h9v11H6z" fill="#185c37"/><path d="M15 11h9v11h-9z" fill="#107c41"/><path d="M0 4h13v14H0z" fill="#107c41"/><path d="m3.500 7 6 8M9.500 7l-6 8" stroke="#fff" stroke-width="2"/></svg>
            <h1 class="flex-1 pl-[5px]">Import Data</h1>
            <button aria-label="Close"><svg width="11" height="11" viewBox="0 0 11 11" stroke="#111" stroke-width="1.100"><path d="m.5.500 10 10M10.500.500l-10 10"/></svg></button>
        </div>

        <div class="h-10 shrink-0 flex items-center pl-[13px] pr-3 pb-[5px]">
            <button aria-label="Back"><svg width="12" height="11" viewBox="0 0 12 11" fill="none" stroke="#ccc" stroke-width="1.300"><path d="M12 5.500H1M5.500 1 1 5.500 5.500 10"/></svg></button>
            <button aria-label="Forward" class="ml-[18px]"><svg width="12" height="11" viewBox="0 0 12 11" fill="none" stroke="#ccc" stroke-width="1.300"><path d="M0 5.500h11M6.500 1 11 5.500 6.500 10"/></svg></button>
            <button aria-label="Recent locations" class="ml-[15px]"><svg width="6" height="4" viewBox="0 0 6 4" fill="none" stroke="#ccc"><path d="m.5.500 2.500 2.500L5.500.5"/></svg></button>
            <button aria-label="Up" class="ml-3"><svg width="11" height="12" viewBox="0 0 11 12" fill="none" stroke="#666" stroke-width="1.500"><path d="M5.500 12V1.500M1 6l4.500-4.500L10 6"/></svg></button>
            <div class="ml-[7px] w-[335px] h-[30px] border border-[#d9d9d9] flex items-center pl-[3px]">
                <svg width="16" height="17" viewBox="0 0 16 17"><path d="M5 0h6v8h4.500L8 16.500.5 8H5z" fill="#3a96dd"/></svg>
                <svg class="ml-[5px] mr-2" width="8" height="6" viewBox="0 0 8 6" fill="none" stroke="#555"><path d="M3.500.500 1 3l2.500 2.500M7.500.500 5 3l2.500 2.500"/></svg>
                <a href="#" class="text-black">Users</a>
                <svg class="mx-2.5" width="4" height="7" viewBox="0 0 4 7" fill="none" stroke="#555" stroke-width="1.200"><path d="m.5.500 3 3-3 3"/></svg>
                <a href="#" class="text-black">DELL</a>
                <svg class="mx-2.5" width="4" height="7" viewBox="0 0 4 7" fill="none" stroke="#555" stroke-width="1.200"><path d="m.5.500 3 3-3 3"/></svg>
                <a href="#" class="text-black">Downloads</a>
                <button aria-label="Previous locations" class="ml-auto mr-[11px]"><svg width="9" height="7" viewBox="0 0 9 7" fill="none" stroke="#666" stroke-width="1.700"><path d="m.8 1.200 3.700 3.900 3.700-3.900"/></svg></button>
                <button aria-label="Refresh" class="w-8 h-full border-l border-[#d9d9d9] grid place-items-center"><svg width="12" height="12" viewBox="0 0 12 12" fill="none" stroke="#555" stroke-width="1.400"><path d="M3.500 2.500a4.500 4.500 0 1 0 5 .200M3 .8v3.200h3.500"/></svg></button>
            </div>
            <label class="ml-3 flex-1 h-[30px] border border-[#d9d9d9] flex items-center pl-3.5">
                <svg width="13" height="13" viewBox="0 0 13 13" fill="none" stroke="#777"><circle cx="8" cy="5" r="4.200"/><path d="M5 8 .5 12.500"/></svg>
                <input type="text" aria-label="Search Downloads" placeholder="Search Downloads" class="flex-1 min-w-0 pl-[13px] outline-none placeholder:text-[#6d6d6d]">
            </label>
        </div>

        <div class="h-[31px] shrink-0 bg-[#f5f6f7] border-b border-[#e5e6e7] flex items-center pl-[18px] pr-[15px] text-[#1e395b] text-xs">
            <button class="flex items-center gap-1">Organize <svg width="8" height="4" viewBox="0 0 8 4" fill="currentColor"><path d="M0 0h8L4 4z"/></svg></button>
            <button class="ml-7">New folder</button>
            <button aria-label="Change view" class="ml-auto flex items-center gap-2.5"><svg width="17" height="13" viewBox="0 0 17 13" fill="none" stroke="#777"><path d="M.5.500h4v12h-4zM.5 4.500h4M.5 8.500h4"/><path d="M6 2.500h11M6 6.500h11M6 10.500h11" stroke-dasharray="5 1"/></svg><svg width="8" height="4" viewBox="0 0 8 4" fill="currentColor"><path d="M0 0h8L4 4z"/></svg></button>
            <button aria-label="Preview pane" class="ml-[21px]"><svg width="16" height="12" viewBox="0 0 16 12"><path d="M.5.500h15v11H.5z" fill="#fff" stroke="#777"/><path d="M1 1h14v1.500H1z" fill="#999"/><path d="M9 2.500h6V11H9z" fill="#4fa9ea"/><path d="M5.500 2v9" stroke="#bbb"/></svg></button>
            <button aria-label="Help" class="ml-5 size-4 rounded-full bg-[#0063b1] text-white font-bold leading-4">?</button>
        </div>

        <div class="h-[292px] shrink-0 flex">
            <ul class="w-[139px] pt-2 *:h-6 *:flex *:items-center *:gap-[5px]">
                <li class="pl-6"><svg width="16" height="16" viewBox="0 0 16 16"><path d="M4 13a4 4 0 0 1 0-7.500A5 5 0 0 1 12.500 6 3.600 3.600 0 0 1 13 13z" fill="#1479cf"/><path d="M4 13l7-5.500a4 4 0 0 1 5 3q0 2.500-3 2.500z" fill="#37a7ed"/></svg>OneDrive</li>
                <li class="pl-6 mt-2"><svg width="16" height="16" viewBox="0 0 16 16"><path d="M.5 1.500h15v10H.5z" fill="#54b5ee" stroke="#2474a8"/><path d="M1 2h9L4 11H1z" fill="#8cd0f7"/><path d="M2 14.500h12" stroke="#666"/></svg>This PC</li>
                <li class="pl-8"><svg width="16" height="16" viewBox="0 0 16 16"><path d="m0 3 8-3 8 3-8 3z" fill="#9be7ef"/><path d="M0 3l8 3v10l-8-3z" fill="#2cb9cb"/><path d="m16 3-8 3v10l8-3z" fill="#149bb0"/><path d="m1 4 6 3v4L1 12z" fill="#70d8e3"/></svg>3D Objects</li>
                <li class="pl-8"><svg width="16" height="16" viewBox="0 0 16 16"><path d="M.5 2.500h15v11H.5z" fill="#0f93e8" stroke="#0a6fb4"/><path d="M2 4.500h6L3 9H2z" fill="#58b9f4"/><path d="M1 12h14v1.500H1z" fill="#0a5d9a"/></svg>Desktop</li>
                <li class="pl-8"><svg width="16" height="16" viewBox="0 0 16 16" fill="none"><path d="M2.500.500h8l3 3v12h-11z" fill="#fff" stroke="#777"/><path d="M4.500 5h3M9 3.500v3M4.500 7.500h7M4.500 10h7M4.500 12.500h7" stroke="#2687b5" stroke-width="1.200"/></svg>Documents</li>
                <li class="pl-8"><svg width="16" height="16" viewBox="0 0 16 16"><path d="M5 0h6v8h4.500L8 15.500.5 8H5z" fill="#3a8fd9"/></svg>Downloads</li>
                <li class="pl-8"><svg width="16" height="16" viewBox="0 0 16 16"><path d="M7 0c1 4 5 4 5 8l-1 3c0-3-1-4-2.500-4.500V13c0 4-5.500 3.500-5.500.5C3 11 5 10.500 7 11z" fill="#0f93e8"/></svg>Music</li>
                <li class="pl-8"><svg width="16" height="16" viewBox="0 0 16 16"><path d="M.5 2.500h15v11H.5z" fill="#fff" stroke="#777"/><path d="M2 4h12v8H2z" fill="#8cc8f2"/><path d="m2 8 5 2 7-1v3H2z" fill="#2c6c78"/></svg>Pictures</li>
                <li class="pl-8"><svg width="16" height="16" viewBox="0 0 16 16"><path d="M1 1h14v14H1z" fill="#222"/><path d="M4.500 1.500h7v6h-7z" fill="#5b7dc9"/><path d="M4.500 8.500h7v6h-7z" fill="#c48840"/><path d="m5 6 3-3 3 4z" fill="#e2b846"/><path d="M2.500 1v14M13.500 1v14" stroke="#ddd" stroke-dasharray="1.500 1.500"/></svg>Videos</li>
                <li class="pl-8 bg-[#d9d9d9]"><svg width="16" height="16" viewBox="0 0 16 16"><path d="M1 2h2.500v2.500H1zM4.500 2H7v2.500H4.500zM1 5.500h2.500V8H1zM4.500 5.500H7V8H4.500z" fill="#10a9e8"/><path d="m3 9 2-1h8l2 2v4H2v-4z" fill="#999"/><path d="M2 10.500h13V14H2z" fill="#333"/><path d="M11 12h2.500" stroke="#6f6"/></svg><a href="#" class="text-black">Local Disk (C:)</a></li>
                <li class="pl-6 mt-2"><svg width="16" height="16" viewBox="0 0 16 16"><circle cx="10.500" cy="5.500" r="5" fill="#5d9bb8"/><path d="M8 1q5 4 1 9M6 4q6 2 9 1" fill="none" stroke="#a9d3e5"/><path d="M.5 6.500h11v7H.5z" fill="#48b1f0" stroke="#2474a8"/><path d="M4 15h5" stroke="#555"/></svg>Network</li>
            </ul>
            <div class="w-4 mx-px bg-[#f0f0f0] flex flex-col items-center">
                <button aria-label="Scroll up" class="h-[82px] pb-16"><svg width="9" height="6" viewBox="0 0 9 6" fill="none" stroke="#444" stroke-width="1.600"><path d="M1 5l3.500-3.600L8 5"/></svg></button>
                <div class="flex-1 w-[15px] bg-[#cdcdcd]"></div>
                <button aria-label="Scroll down" class="h-[22px] pt-1"><svg width="9" height="6" viewBox="0 0 9 6" fill="none" stroke="#444" stroke-width="1.600"><path d="m1 1 3.500 3.600L8 1"/></svg></button>
            </div>

            <div class="flex-1 min-w-0 flex flex-col">
                <div class="relative flex-1 min-h-0 overflow-hidden">
                    <table class="table-fixed w-[521px] text-left">
                        <colgroup><col class="w-[17px]"><col class="w-[257px]"><col class="w-36"><col></colgroup>
                        <thead>
                            <tr class="h-7 text-[#4c607a] text-[11px] align-top *:font-normal">
                                <td></td>
                                <th scope="col" class="pl-[3px] pt-1.5">Name</th>
                                <th scope="col" class="pl-[7px] pt-1.5 bg-[linear-gradient(#e5e5e5,#e5e5e5)] bg-[length:1px_24px] bg-no-repeat">Date modified</th>
                                <th scope="col" class="pl-[7px] pt-1.5 bg-[linear-gradient(#e5e5e5,#e5e5e5)] bg-[length:1px_24px] bg-no-repeat">Type</th>
                            </tr>
                        </thead>
                        <tbody id="files"></tbody>
                    </table>
                    <svg class="absolute left-[342px] top-0" width="9" height="5" viewBox="0 0 9 5" fill="none" stroke="#888"><path d="m1 .5 3.500 3L8 .5"/></svg>
                    <!-- Tooltip on its way out -->
                    <div role="tooltip" class="absolute left-[221px] top-[108px] w-48 h-[51px] px-1.5 border border-[#f3f3f3] shadow-[1px_1px_3px_rgba(0,0,0,.04)] text-[#f3f3f3] leading-4 whitespace-nowrap">Type: JSON Source File<br>Size: 580 bytes<br>Date modified: 7/18/2023 1:15 PM</div>
                </div>
                <div class="h-4 mb-px bg-[#f0f0f0] flex items-center pl-2 pr-[5px]">
                    <button aria-label="Scroll left"><svg width="6" height="9" viewBox="0 0 6 9" fill="none" stroke="#444" stroke-width="1.600"><path d="M5 1 1.400 4.500 5 8"/></svg></button>
                    <div class="ml-1.5 w-[383px] h-[15px] bg-[#cdcdcd]"></div>
                    <button aria-label="Scroll right" class="ml-auto"><svg width="6" height="9" viewBox="0 0 6 9" fill="none" stroke="#444" stroke-width="1.600"><path d="m1 1 3.600 3.500L1 8"/></svg></button>
                </div>
            </div>
        </div>

        <form class="relative flex-1 bg-[#f0f0f0] pt-[9px] pr-[17px] flex flex-col gap-1.5">
            <div class="flex items-center justify-end">
                <label for="filename" class="mr-1.5">File name:</label>
                <div class="w-[261px] h-6 bg-white border border-[#7a7a7a] flex items-center pr-1">
                    <input id="filename" type="text" value="new" class="flex-1 min-w-0 pl-[3px] outline-none">
                    <svg width="9" height="6" viewBox="0 0 9 6" fill="none" stroke="#555" stroke-width="1.200"><path d="m.7.800 3.800 4 3.800-4"/></svg>
                </div>
                <div class="relative ml-3 w-[188px]">
                    <select aria-label="File type" class="block w-full h-[23px] pl-[3px] appearance-none bg-[#e1e1e1] border border-[#adadad]"><option>All Files</option></select>
                    <svg class="absolute right-1 top-2 pointer-events-none" width="9" height="6" viewBox="0 0 9 6" fill="none" stroke="#555" stroke-width="1.200"><path d="m.7.800 3.800 4 3.800-4"/></svg>
                </div>
            </div>
            <div class="flex items-center justify-end">
                <button type="button" class="flex items-center gap-4">Tools <svg width="8" height="4" viewBox="0 0 8 4"><path d="M0 0h8L4 4z"/></svg></button>
                <button type="button" class="ml-4 w-[87px] h-6 bg-[#e1e1e1] border-2 border-[#1673b5]">Import</button>
                <button type="button" class="ml-[13px] mr-px w-[86px] h-6 bg-[#e1e1e1] border border-[#adadad]">Cancel</button>
            </div>
            <svg class="absolute right-0.5 bottom-0.5" width="10" height="10" viewBox="0 0 10 10" fill="#bbb"><path d="M8 0h2v2H8zM4 4h2v2H4zM8 4h2v2H8zM0 8h2v2H0zM4 8h2v2H4zM8 8h2v2H8z"/></svg>
        </form>
    </div>

    <script>
        // Worksheet grid
        document.getElementById("columns").innerHTML =
            '<th class="w-[26px] bg-[#e6e6e6] border-r border-b border-[#ababab]"></th>' +
            "ABCDEFGHIJKLMNOP".split("").map(c =>
                `<th scope="col" class="w-16 h-[19px] p-0 leading-4 font-normal bg-[#e6e6e6] border-r border-b border-r-[#bbb] border-b-[#999]">${c}</th>`
            ).join("");

        let html = "";
        for (let r = 1; r <= 23; r++) {
            html += `<tr class="h-5"><th scope="row" class="h-5 p-0 leading-[18px] font-normal border-r border-b border-r-[#999] border-b-[#bbb] ${r === 1 ? "bg-[#cfcfcf]" : "bg-[#e6e6e6]"}">${r}</th>`;
            html += '<td class="h-5 p-0 border-r border-b border-[#d0d0d0]"></td>'.repeat(16) + "</tr>";
        }
        document.getElementById("rows").innerHTML = html;

        // File list
        const icons = {
            json: '<path d="M2.500 1.500h8l3 3v10h-11z" fill="#fff" stroke="#bbb"/><path d="M7 5.500q-1.500 0-1.200 2T5 8.500q1 0 .8 1.300T7 11.500M9 5.500q1.500 0 1.200 2t.8 1q-1 0-.8 1.300T9 11.500" fill="none" stroke="#a9b43a"/>',
            jpg: '<path d="M2.500.500h8l3 3v12h-11z" fill="#fff" stroke="#999"/><path d="M4.500 5.500h7v6h-7z" fill="#2270b8"/><path d="m4.500 11.500 3-3 4 3z" fill="#0b3766"/>',
            office: '<path d="M8 .5Q1 2 1 8q0 3 2.500 4.500L6 11Q4 6 9 4.500L12 2Q10 .3 8 .5z" fill="#3b6fd8"/><path d="M8 .5q6 1 7 7 0 3-2 5l-3-2q2-4-2-6L6 3z" fill="#9a6be8"/><path d="M2 11q2 4.500 6 4.500 5 0 7-6l-4 1q-4 3-7-1z" fill="#5a41b8"/>',
            code: '<path d="M11 0l4.500 2v12L11 16z" fill="#2da5ee"/><path d="M11 0 .5 10 2 11.500 12 4z" fill="#1a80cb"/><path d="M11 16 .5 6 2 4.500 12 12z" fill="#1171b8"/>',
            setup: '<path d="M1.500 2.500h10v9h-10z" fill="#dfe9f4" stroke="#6d86a8"/><path d="M3 0h6v5H3z" fill="#8aa9cc"/><path d="M4 7h4v7H4z" fill="#5da548"/><circle cx="10.500" cy="10" r="5" fill="#e4e9f2" stroke="#667ea6"/><path d="m7 13 7-6" stroke="#3468b8"/><circle cx="10.500" cy="10" r="1.300" fill="#fff" stroke="#667ea6"/>'
        };
        const groups = [
            ["Today (3)", [
                ["json", "3FTM", "7/18/2023 1:27 PM", "JSON Source File"],
                ["json", "new", "7/18/2023 1:15 PM", "JSON Source File"],
                ["office", "OfficeSetup", "7/18/2023 12:45 PM", "Application"]
            ]],
            ["Last month (5)", [
                ["jpg", "wp5074644", "6/21/2023 11:02 PM", "JPG File"],
                ["jpg", "a992b2cf931522d217fe81738a1f5659", "6/21/2023 11:01 PM", "JPG File"],
                ["jpg", "badass-anime-316a8re3ybechrjt", "6/7/2023 10:36 PM", "JPG File"],
                ["code", "VSCodeUserSetup-x64-1.78.2", "6/4/2023 5:43 AM", "Application"],
                ["setup", "ChromeSetup", "6/3/2023 9:35 PM", "Application"]
            ]]
        ];
        document.getElementById("files").innerHTML = groups.map(([title, files]) => `
            <tr class="h-8"><th colspan="4" class="p-0 font-normal text-sm text-[#1e3287]">
                <div class="flex items-center pl-[9px] w-[504px]">
                    <svg width="11" height="7" viewBox="0 0 11 7" fill="none" stroke="#777"><path d="m.8 1 4.700 4.700L10.200 1"/></svg>
                    <span class="pl-1 pr-2">${title}</span><span class="flex-1 h-px bg-[#e2e2e2]"></span>
                </div>
            </th></tr>` + files.map(([icon, name, date, type]) => {
                const bg = name === "new" ? "bg-[#cce8ff] border-y border-[#99d1ff]" : "";
                return `<tr class="h-[21px] whitespace-nowrap text-[#6d6d6d]">
                    <td></td>
                    <td class="p-0 ${bg}"><div class="flex items-center gap-1 pl-1 h-[19px] text-black"><svg class="shrink-0" width="16" height="16" viewBox="0 0 16 16">${icons[icon]}</svg>${name}</div></td>
                    <td class="p-0 pl-[7px] ${bg}">${date}</td>
                    <td class="p-0 pl-[7px] ${bg}">${type}</td>
                </tr>`;
            }).join("")).join("");
    </script>
</body>
</html>
